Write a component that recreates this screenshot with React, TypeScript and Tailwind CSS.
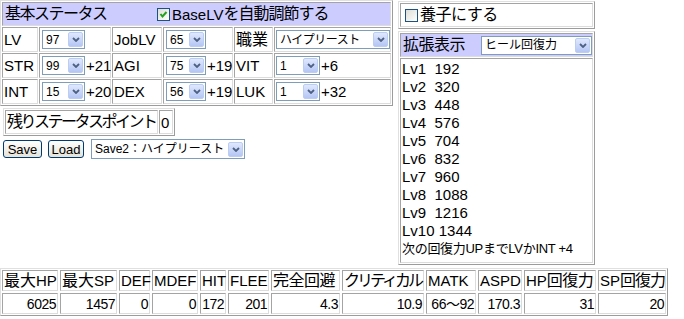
import React from "react";

const tableOuter =
  "border border-t-[#e0e0e0] border-l-[#e0e0e0] border-b-[#9c9c9c] border-r-[#9c9c9c]";
const cellB =
  "border border-t-[#a4a4a4] border-l-[#a4a4a4] border-b-[#dcdcdc] border-r-[#dcdcdc]";

function J({ children, cls = "" }: { children: React.ReactNode; cls?: string }) {
  return <span className={"text-[16px] " + cls}>{children}</span>;
}

function Chevron() {
  return (
    <svg width="8" height="5" viewBox="0 0 8 5">
      <path d="M1 1 L4 4 L7 1" fill="none" stroke="#4d6185" strokeWidth="1.8" />
    </svg>
  );
}

function Sel({ cls, text, tcls = "" }: { cls: string; text: string; tcls?: string }) {
  return (
    <div className={"flex items-center border border-[#7f9db9] bg-white h-[19px] shrink-0 " + cls}>
      <span className={"pl-[3px] text-[12px] leading-none whitespace-nowrap text-black " + tcls}>{text}</span>
      <div className="ml-auto mr-[1px] w-[15px] h-[15px] shrink-0 rounded-[2px] border border-[#bccdf3] bg-gradient-to-b from-[#e0e8fd] to-[#b4c6f3] flex items-center justify-center">
        <Chevron />
      </div>
    </div>
  );
}

function Check({ checked }: { checked: boolean }) {
  return (
    <div className="w-[13px] h-[13px] border border-[#1c5180] bg-gradient-to-br from-[#dcdcd7] to-white flex items-center justify-center shrink-0">
      {checked && (
        <svg width="9" height="9" viewBox="0 0 9 9">
          <path d="M1.5 4 L3.5 6.5 L7.5 2" fill="none" stroke="#21a121" strokeWidth="2" />
        </svg>
      )}
    </div>
  );
}

function Btn({ children, cls }: { children: React.ReactNode; cls: string }) {
  return (
    <div
      className={
        "h-[18px] rounded-[3px] border border-[#003c74] bg-gradient-to-b from-white to-[#e6e3d6] flex items-center justify-center text-[13px] leading-none " +
        cls
      }
    >
      {children}
    </div>
  );
}

function Cell({ cls, children }: { cls: string; children?: React.ReactNode }) {
  return <div className={cellB + " flex items-center shrink-0 pl-[1px] whitespace-nowrap " + cls}>{children}</div>;
}

export default function App() {
  const rows = [
    { a: "STR", av: "99", ab: "+21", b: "AGI", bv: "75", bb: "+19", c: "VIT", cv: "1", cb: "+6" },
    { a: "INT", av: "15", ab: "+20", b: "DEX", bv: "56", bb: "+19", c: "LUK", cv: "1", cb: "+32" },
  ];
  const lv = [
    ["Lv1", "  192"],
    ["Lv2", "  320"],
    ["Lv3", "  448"],
    ["Lv4", "  576"],
    ["Lv5", "  704"],
    ["Lv6", "  832"],
    ["Lv7", "  960"],
    ["Lv8", "  1088"],
    ["Lv9", "  1216"],
    ["Lv10", " 1344"],
  ];
  const stats: [React.ReactNode, string, string, string][] = [
    [<><J>最大</J>HP</>, "6025", "w-[56px]", "a"],
    [<><J>最大</J>SP</>, "1457", "w-[57px]", "b"],
    ["DEF", "0", "w-[31px]", "c"],
    ["MDEF", "0", "w-[46px]", "d"],
    ["HIT", "172", "w-[26px]", "e"],
    ["FLEE", "201", "w-[41px]", "f"],
    [<J cls="tracking-[-0.5px]">完全回避</J>, "4.3", "w-[69px]", "g"],
    [<J cls="tracking-[-3px]">クリティカル</J>, "10.9", "w-[82px]", "h"],
    ["MATK", "66〜92", "w-[50px]", "i"],
    ["ASPD", "170.3", "w-[44px]", "j"],
    [<>HP<J cls="tracking-[-0.5px]">回復力</J></>, "31", "w-[72px]", "k"],
    [<>SP<J cls="tracking-[-1px]">回復力</J></>, "20", "w-[68px]", "l"],
  ];
  return (
    <div className="w-[684px] h-[319px] bg-white text-black font-['Liberation_Sans','Noto_Sans_CJK_JP',sans-serif] text-[15px] leading-none overflow-hidden">
      <div className="flex items-start">
        {/* left column */}
        <div className="flex flex-col w-[393px]">
          <div className={tableOuter + " w-[393px] p-[1px] flex flex-col gap-[1px]"}>
            <div className={cellB + " h-[24px] bg-[#ccccff] flex items-center pl-[2px]"}>
              <J cls="w-[152px] tracking-[-1.5px]">基本ステータス</J>
              <Check checked />
              <span className="ml-[2px]">BaseLV</span>
              <J cls="tracking-[-1px]">を自動調節する</J>
            </div>
            <div className="flex gap-[1px] h-[25px]">
              <Cell cls="w-[36px] h-[25px]">LV</Cell>
              <Cell cls="w-[72px] h-[25px]">
                <Sel cls="w-[43px] ml-[1px]" text="97" />
              </Cell>
              <Cell cls="w-[50px] h-[25px]">JobLV</Cell>
              <Cell cls="w-[70px] h-[25px]">
                <Sel cls="w-[40px] ml-[1px]" text="65" />
              </Cell>
              <Cell cls="w-[39px] h-[25px]">
                <J>職業</J>
              </Cell>
              <Cell cls="w-[117px] h-[25px]">
                <Sel cls="w-[114px]" text="ハイプリースト" tcls="tracking-[-0.5px]" />
              </Cell>
            </div>
            {rows.map((r) => (
              <div key={r.a} className="flex gap-[1px] h-[25px]">
                <Cell cls="w-[36px] h-[25px]">{r.a}</Cell>
                <Cell cls="w-[72px] h-[25px]">
                  <Sel cls="w-[43px] ml-[1px]" text={r.av} />
                  <span className="ml-[1px]">{r.ab}</span>
                </Cell>
                <Cell cls="w-[50px] h-[25px]">{r.b}</Cell>
                <Cell cls="w-[70px] h-[25px]">
                  <Sel cls="w-[40px] ml-[1px]" text={r.bv} />
                  <span className="ml-[1px]">{r.bb}</span>
                </Cell>
                <Cell cls="w-[39px] h-[25px]">{r.c}</Cell>
                <Cell cls="w-[117px] h-[25px]">
                  <Sel cls="w-[44px]" text={r.cv} />
                  <span className="ml-[1px]">{r.cb}</span>
                </Cell>
              </div>
            ))}
          </div>
          <div className="mt-[2px] ml-[3px] flex">
            <div className={tableOuter + " p-[1px] flex gap-[1px]"}>
              <Cell cls="w-[153px] h-[24px]">
                <J cls="tracking-[-2.5px]">残りステータスポイント</J>
              </Cell>
              <Cell cls="w-[14px] h-[24px]">0</Cell>
            </div>
          </div>
          <div className="mt-[3px] flex items-center">
            <Btn cls="ml-[3px] w-[39px]">Save</Btn>
            <Btn cls="ml-[6px] w-[36px]">Load</Btn>
            <Sel cls="ml-[7px] w-[154px] h-[20px]" text="Save2：ハイプリースト" tcls="text-[12px]" />
          </div>
        </div>
        {/* right column */}
        <div className="ml-[5px] mt-[1px] flex flex-col gap-[2px] w-[197px]">
          <div className={tableOuter + " p-[1px] h-[28px] flex"}>
            <div className={cellB + " flex-1 flex items-center pl-[4px]"}>
              <Check checked={false} />
              <J cls="ml-[2px] tracking-[-0.5px]">養子にする</J>
            </div>
          </div>
          <div className={tableOuter + " p-[1px] flex flex-col gap-[1px] h-[234px]"}>
            <div className={cellB + " h-[24px] bg-[#ccccff] flex items-center pl-[2px]"}>
              <J cls="w-[80px] tracking-[-0.5px]">拡張表示</J>
              <Sel cls="w-[111px]" text="ヒール回復力" />
            </div>
            <div className={cellB + " flex-1 pl-[1px] flex flex-col"}>
              {lv.map(([a, b]) => (
                <div key={a} className="h-[18px] flex items-center whitespace-pre text-[15px]">
                  {a}
                  {b}
                </div>
              ))}
              <div className="h-[18px] flex items-center text-[13px] whitespace-pre tracking-[-0.3px]">次の回復力UPまでLVかINT +4</div>
            </div>
          </div>
        </div>
      </div>
      {/* bottom table */}
      <div className={tableOuter + " mt-[3px] w-[668px] p-[1px] flex flex-col gap-[2px]"}>
        <div className="flex gap-[2px]">
          {stats.map(([h, , w, k]) => (
            <div key={k} className={cellB + " h-[21px] flex items-center pl-[1px] whitespace-nowrap shrink-0 " + w}>
              {h}
            </div>
          ))}
        </div>
        <div className="flex gap-[2px]">
          {stats.map(([, v, w, k]) => (
            <div key={k} className={cellB + " h-[21px] flex items-center justify-end pr-[1px] whitespace-nowrap shrink-0 text-[14px] tracking-[-0.5px] " + w}>
              {v}
            </div>
          ))}
        </div>
      </div>
    </div>
  );
}
